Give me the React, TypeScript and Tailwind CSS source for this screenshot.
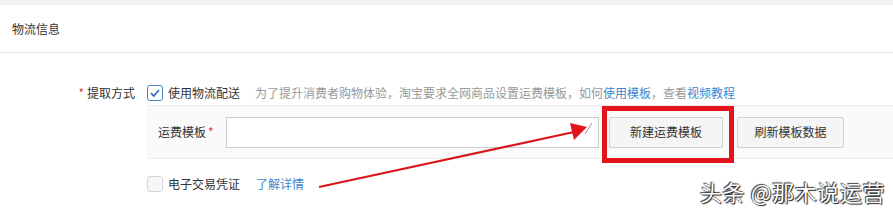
import React from 'react';

const font = { fontFamily: '"Noto Sans CJK SC", "Noto Sans", sans-serif' };

function CheckBox({ checked }: { checked?: boolean }) {
  if (checked) {
    return (
      <span className="flex h-[16px] w-[16px] items-center justify-center rounded-[3px] border border-[#4a86c5] bg-white">
        <svg width="12" height="12" viewBox="0 0 12 12">
          <path d="M2 6.2 L4.8 9 L10 3" fill="none" stroke="#2f73bd" strokeWidth="1.8" />
        </svg>
      </span>
    );
  }
  return <span className="h-[16px] w-[16px] rounded-[3px] border border-[#d6d6d6] bg-[#f7f7f7]" />;
}

export default function App() {
  return (
    <div className="relative h-[214px] w-[893px] overflow-hidden bg-white text-[12px] text-[#333]" style={font}>
      <div className="h-[5px] bg-[#f2f2f2]" />
      <div className="flex h-[48px] items-center border-b border-[#e8e8e8] px-[12px]">物流信息</div>

      <div className="pt-[31px]">
        <div className="flex h-[17px] items-center">
          <div className="w-[135px] text-right">
            <span className="mr-[3px] text-[#e4393c]">*</span>提取方式
          </div>
          <div className="ml-[12px] flex items-center">
            <CheckBox checked />
            <span className="ml-[5px]">使用物流配送</span>
            <span className="ml-[15px] text-[#999]">
              为了提升消费者购物体验，淘宝要求全网商品设置运费模板，如何
              <span className="text-[#3b86cf]">使用模板</span>，查看
              <span className="text-[#3b86cf]">视频教程</span>
            </span>
          </div>
        </div>

        <div className="ml-[147px] mt-[4px] flex h-[54px] items-center border-y border-[#eeeeee] bg-[#fafafa] pl-[11px]">
          <div className="w-[68px]">
            运费模板<span className="ml-[2px] text-[#e4393c]">*</span>
          </div>
          <div className="h-[31px] w-[373px] border border-[#cccccc] bg-white" />
          <button className="ml-[10px] h-[31px] w-[114px] rounded-[2px] border border-[#d2d2d2] bg-[#f5f5f5] text-[12px] text-[#333]">
            新建运费模板
          </button>
          <button className="ml-[14px] h-[31px] w-[107px] rounded-[2px] border border-[#d2d2d2] bg-[#f5f5f5] text-[12px] text-[#333]">
            刷新模板数据
          </button>
        </div>

        <div className="mt-[16px] flex h-[17px] items-center pl-[147px]">
          <CheckBox />
          <span className="ml-[5px]">电子交易凭证</span>
          <span className="ml-[16px] text-[#3b86cf]">了解详情</span>
        </div>
      </div>

      {/* annotation overlays */}
      <div className="absolute left-[602px] top-[106px] h-[57px] w-[132px] border-[5px] border-[#e3141b]" />
      <svg className="absolute left-0 top-0" width="893" height="214" viewBox="0 0 893 214">
        <line x1="585" y1="134" x2="592" y2="123" stroke="#999" strokeWidth="1" />
        <line x1="319" y1="187" x2="574" y2="132" stroke="#d9161c" strokeWidth="2.2" />
        <polygon points="587,127 570,123 574,140" fill="#e3141b" />
      </svg>
      <div
        className="absolute left-[700px] top-[176px] text-[22px] leading-[30px] tracking-[0.6px] text-white"
        style={{ textShadow: '0 0 1px #222, 1px 1px 1px #222, -1px -1px 1px #444' }}
      >
        头条 @那木说运营
      </div>
    </div>
  );
}
